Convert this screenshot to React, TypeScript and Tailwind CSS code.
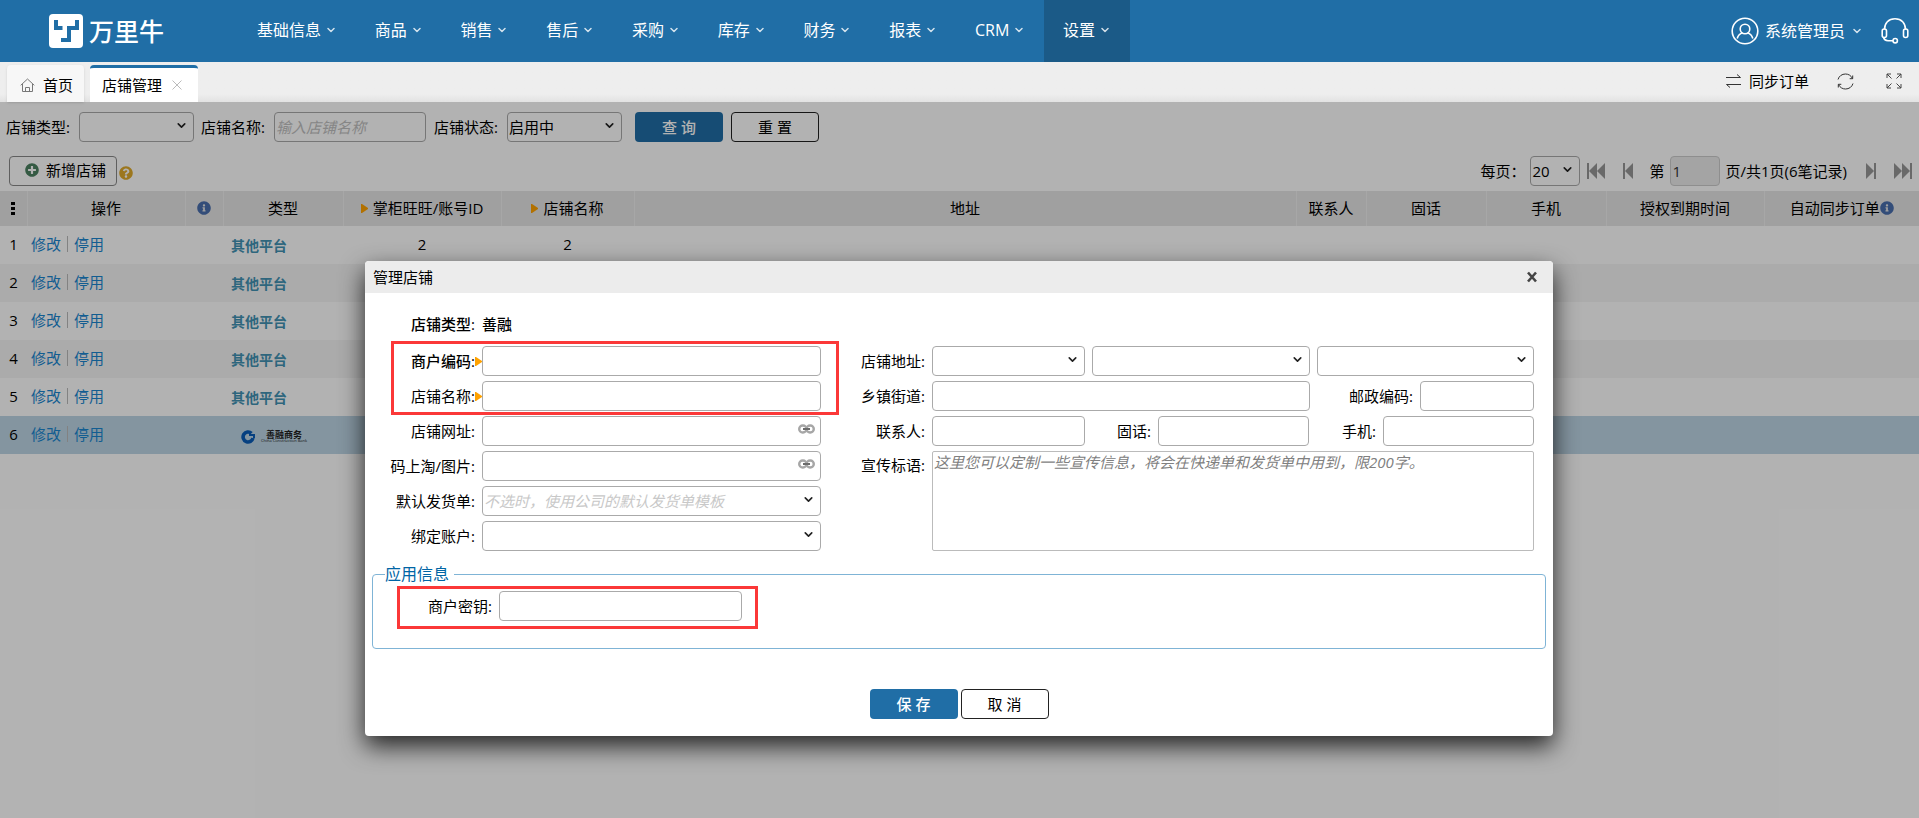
import React from "react"
import { ChevronDown } from "lucide-react"
import { FaInfoCircle, FaPlusCircle, FaQuestionCircle } from "react-icons/fa"
import clsx from "clsx"

const NAV_ITEMS = ["基础信息", "商品", "销售", "售后", "采购", "库存", "财务", "报表", "CRM", "设置"]

type Shop = { id: number; type: "other" | "ccb"; account?: string; name?: string }

const SHOPS: Shop[] = [
  { id: 1, type: "other", account: "2", name: "2" },
  { id: 2, type: "other" },
  { id: 3, type: "other" },
  { id: 4, type: "other" },
  { id: 5, type: "other" },
  { id: 6, type: "ccb" },
]

// Icons

const LogoMark: React.FC = () => (
  <svg width="34" height="34" viewBox="0 0 34 34" aria-hidden="true">
    <rect width="34" height="34" rx="4" fill="#fff" />
    <path d="M7 6v8h6.500M28 6v8h-8v12h-8" fill="none" stroke="#206ea6" strokeWidth="4" />
  </svg>
)

const HomeIcon: React.FC = () => (
  <svg width="15" height="15" viewBox="0 0 15 15" fill="none" stroke="#777" aria-hidden="true">
    <path d="M.7 7.3 7.5 1l6.8 6.3M2.5 6v7.5h10V6M5.5 13.5v-4h4v4" />
  </svg>
)

const CloseThinIcon: React.FC = () => (
  <svg width="10" height="10" viewBox="0 0 10 10" stroke="#bbb" aria-hidden="true">
    <path d="M.5.5l9 9M9.500.5l-9 9" />
  </svg>
)

const UserIcon: React.FC = () => (
  <svg width="28" height="28" viewBox="0 0 28 28" fill="none" stroke="#fff" strokeWidth="1.6" aria-hidden="true">
    <circle cx="14" cy="14" r="12.8" />
    <circle cx="14" cy="12" r="4.8" />
    <path d="M6.200 21.500c1-3.300 3-5 5.300-5.700M21.800 21.500c-1-3.300-3-5-5.300-5.700" />
  </svg>
)

const HeadsetIcon: React.FC = () => (
  <svg width="28" height="28" viewBox="0 0 28 28" fill="none" stroke="#fff" strokeWidth="1.6" aria-hidden="true">
    <path d="M3.500 12.500C3.500 6 7.500 1.800 14 1.800s10.500 4.200 10.500 10.700" />
    <rect x="1.200" y="12" width="4.300" height="8.500" rx="2" />
    <rect x="22.500" y="12" width="4.300" height="8.500" rx="2" />
    <path d="M2.500 20c.5 2.500 2 3.700 4.500 3.700h5" />
    <circle cx="14.200" cy="23.700" r="2.200" />
  </svg>
)

const SwapIcon: React.FC = () => (
  <svg width="15" height="14" viewBox="0 0 15 14" fill="none" stroke="#333" aria-hidden="true">
    <path d="M0 3.500h14.500M11 .5l3.500 3M15 10.500H.5M4 13.500l-3.500-3" />
  </svg>
)

const RefreshIcon: React.FC = () => (
  <svg width="17" height="17" viewBox="0 0 17 17" fill="none" stroke="#333" aria-hidden="true">
    <path d="M1 6.500C2 3 5 1 8.500 1c3 0 5.500 1.500 7 4.500M16 10.500C15 14 12 16 8.500 16c-3 0-5.500-1.500-7-4.500M15.700 2.500v3.200h-3M1.300 14.500v-3.200h3" />
  </svg>
)

const ExpandIcon: React.FC = () => (
  <svg width="16" height="16" viewBox="0 0 16 16" fill="none" stroke="#444" aria-hidden="true">
    <path d="M1 5V1h4M1 1l4.500 4.500M11 1h4v4M15 1l-4.500 4.500M1 11v4h4M1 15l4.500-4.500M15 11v4h-4M15 15l-4.500-4.500" />
  </svg>
)

const LinkIcon: React.FC = () => (
  <svg width="17" height="10" viewBox="0 0 17 10" fill="none" aria-hidden="true">
    <rect x="1.200" y="1.500" width="7.300" height="7" rx="3.500" stroke="#a6a6a6" strokeWidth="2.400" />
    <rect x="8.500" y="1.500" width="7.300" height="7" rx="3.500" stroke="#a6a6a6" strokeWidth="2.400" />
    <path d="M5 5h7" stroke="#6b6b6b" strokeWidth="2" />
  </svg>
)

const SkipIcon: React.FC<{ double?: boolean; flip?: boolean }> = ({ double, flip }) => (
  <svg
    width={double ? 18 : 11}
    height="16"
    viewBox={double ? "0 0 18 16" : "0 0 11 16"}
    fill="#979797"
    className={flip ? "rotate-180" : ""}
    aria-hidden="true"
  >
    <path d="M0 0h2v16H0zM10 0v16L2 8z" />
    {double && <path d="M18 0v16l-8-8z" />}
  </svg>
)

const Marker: React.FC = () => (
  <svg width="7" height="9" viewBox="0 0 7 9" fill="#ffa200" className="shrink-0" aria-hidden="true">
    <path d="M0 0h1l6 4v1L1 9H0z" />
  </svg>
)

const CcbLogo: React.FC = () => (
  <span className="flex items-center gap-1.5 pl-[10px] pt-1">
    <svg width="14" height="14" viewBox="0 0 14 14" fill="none" aria-hidden="true">
      <path d="M10.500 3.300A5 5 0 1 0 12 8" stroke="#0a5cb8" strokeWidth="3.600" />
      <path d="M8 5h5v3" stroke="#0a5cb8" strokeWidth="2" />
    </svg>
    <span className="flex flex-col items-center font-bold text-[#222]">
      <span className="text-[9px] leading-[8px]">善融商务</span>
      <span className="text-[4px] leading-[4px] font-normal">China Construction Bank</span>
    </span>
  </span>
)

// Form controls

const box = "h-[30px] rounded border border-[#aaa] bg-white px-px text-[15px] outline-none"

type SelectProps = { id?: string; label?: string; value?: string; className?: string; hint?: boolean }

const Select: React.FC<SelectProps> = ({ id, label, value = "", className, hint }) => (
  <span className={clsx("relative inline-flex", className)}>
    <select
      id={id}
      aria-label={label}
      className={clsx(box, "w-full appearance-none", hint && "italic text-[#c8c8c8]")}
    >
      <option>{value}</option>
    </select>
    <ChevronDown size={13} strokeWidth={3} className="pointer-events-none absolute right-1.5 top-[7px] text-[#222]" />
  </span>
)

const Label: React.FC<{ htmlFor?: string; className?: string; children: React.ReactNode }> = ({
  htmlFor,
  className,
  children,
}) => (
  <label htmlFor={htmlFor} className={clsx("shrink-0 whitespace-nowrap pr-[7px] text-right", className)}>
    {children}
  </label>
)

type RowProps = { id: string; label: string; bold?: boolean; required?: boolean; children: React.ReactNode }

const LeftRow: React.FC<RowProps> = ({ id, label, bold, required, children }) => (
  <div className="flex h-[30px] items-center">
    <label
      htmlFor={id}
      className={clsx(
        "flex w-[117px] shrink-0 items-center justify-end whitespace-nowrap",
        bold && "font-medium",
        !required && "pr-[7px]",
      )}
    >
      {label}
      {required && <Marker />}
    </label>
    {children}
  </div>
)

const PrimaryButton: React.FC<{ children: React.ReactNode }> = ({ children }) => (
  <button type="button" className="h-[30px] w-[88px] rounded bg-[#206ea6] font-medium text-white">
    {children}
  </button>
)

const PlainButton: React.FC<{ children: React.ReactNode }> = ({ children }) => (
  <button type="button" className="h-[30px] w-[88px] rounded border border-[#222] bg-white">
    {children}
  </button>
)

// Page sections

const Header: React.FC = () => (
  <header className="flex h-[62px] items-center bg-[#206ea6] pb-px text-base text-white">
    <a href="#" className="flex w-[238px] shrink-0 items-center gap-1.5 pl-[49px]">
      <LogoMark />
      <span className="text-[25px] leading-[34px] font-medium">万里牛</span>
    </a>
    <nav className="-mb-px flex w-[892px] self-stretch">
      {NAV_ITEMS.map((item) => (
        <a
          key={item}
          href="#"
          className={clsx(
            "flex grow items-center justify-center gap-1 whitespace-nowrap pb-[2px]",
            item === "设置" && "bg-[#1b5a87]",
          )}
        >
          {item}
          <ChevronDown size={12} strokeWidth={3} className="opacity-80" />
        </a>
      ))}
    </nav>
    <div className="ml-auto flex items-center pr-[10px]">
      <button type="button" className="flex items-center gap-1.5">
        <UserIcon />
        系统管理员
        <ChevronDown size={12} strokeWidth={3} className="opacity-80" />
      </button>
      <button type="button" aria-label="客服" className="ml-[18px]">
        <HeadsetIcon />
      </button>
    </div>
  </header>
)

const TabBar: React.FC = () => (
  <div className="flex h-10 items-end bg-linear-to-b from-[#eee] from-80% to-[#e2e2e2] pl-[7px]">
    <a href="#" className="flex h-[37px] w-[77px] items-center gap-2 rounded-t bg-[#f7f7f7] pl-[13px] pt-[3px] shadow-sm">
      <HomeIcon />
      首页
    </a>
    <div className="ml-1.5 flex h-[37px] w-[108px] items-center gap-2.5 rounded-t border-t-[3px] border-[#206ea6] bg-white pl-3">
      店铺管理
      <button type="button" aria-label="关闭">
        <CloseThinIcon />
      </button>
    </div>
    <div className="ml-auto flex h-10 items-center pb-[2px] pr-[17px]">
      <button type="button" className="flex items-center gap-2">
        <SwapIcon />
        同步订单
      </button>
      <button type="button" aria-label="刷新" className="ml-7">
        <RefreshIcon />
      </button>
      <button type="button" aria-label="全屏" className="ml-8">
        <ExpandIcon />
      </button>
    </div>
  </div>
)

const Filters: React.FC = () => (
  <form className="flex items-center pl-1.5 pt-2.5">
    <label htmlFor="f-type" className="w-[73px]">店铺类型:</label>
    <Select id="f-type" className="w-[115px]" />
    <label htmlFor="f-name" className="ml-[7px] w-[73px]">店铺名称:</label>
    <input id="f-name" placeholder="输入店铺名称" className={clsx(box, "w-[152px] placeholder:italic placeholder:text-[#c0c0c0]")} />
    <label htmlFor="f-state" className="ml-2 w-[73px]">店铺状态:</label>
    <Select id="f-state" value="启用中" className="mr-[13px] w-[115px]" />
    <span className="flex gap-2">
      <PrimaryButton>查 询</PrimaryButton>
      <PlainButton>重 置</PlainButton>
    </span>
  </form>
)

const Toolbar: React.FC = () => (
  <div className="flex items-center py-[5px] pl-[9px] pr-[7px] pt-3.5">
    <button type="button" className="flex h-[30px] w-[108px] items-center gap-[7px] rounded border border-[#888] pb-[2px] pl-[15px]">
      <FaPlusCircle size={14} className="text-[#4b8161]" />
      新增店铺
    </button>
    <FaQuestionCircle size={14} className="ml-[2px] mt-1 text-[#e0ab2c]" />
    <div className="ml-auto flex items-center">
      <label htmlFor="p-size" className="mr-[5px]">每页：</label>
      <Select id="p-size" value="20" className="mr-[7px] w-[50px]" />
      <button type="button" aria-label="首页"><SkipIcon double /></button>
      <button type="button" aria-label="上一页" className="ml-[18px]"><SkipIcon /></button>
      <label htmlFor="p-no" className="ml-[15px] mr-1.5">第</label>
      <input id="p-no" defaultValue="1" className="h-[30px] w-[50px] rounded border border-[#ccc] bg-[#ebebeb] px-px text-[#333]" />
      <span className="ml-[5px]">页/共1页(6笔记录)</span>
      <button type="button" aria-label="下一页" className="ml-[18px]"><SkipIcon flip /></button>
      <button type="button" aria-label="末页" className="ml-[18px]"><SkipIcon double flip /></button>
    </div>
  </div>
)

const Th: React.FC<{ children: React.ReactNode }> = ({ children }) => (
  <th className="h-[35px] border-r border-[#f0f0f0] pb-px font-normal last:border-r-0">
    <span className="flex items-center justify-center">{children}</span>
  </th>
)

const ShopTable: React.FC = () => (
  <table className="w-full table-fixed">
    <colgroup>
      <col className="w-[27px]" />
      <col className="w-[158px]" />
      <col className="w-[38px]" />
      <col className="w-[120px]" />
      <col className="w-[158px]" />
      <col className="w-[133px]" />
      <col />
      <col className="w-[70px]" />
      <col className="w-[120px]" />
      <col className="w-[120px]" />
      <col className="w-[158px]" />
      <col className="w-[155px]" />
    </colgroup>
    <thead className="bg-[#e5e5e5]">
      <tr>
        <Th>
          <svg width="4" height="13" viewBox="0 0 4 13" aria-hidden="true">
            <path d="M0 0h4v3H0zM0 5h4v3H0zM0 10h4v3H0z" />
          </svg>
        </Th>
        <Th>操作</Th>
        <Th><FaInfoCircle size={14} className="shrink-0 text-[#4a6fae]" /></Th>
        <Th>类型</Th>
        <Th><Marker /><span className="ml-[5px]">掌柜旺旺/账号ID</span></Th>
        <Th><Marker /><span className="ml-[5px]">店铺名称</span></Th>
        <Th>地址</Th>
        <Th>联系人</Th>
        <Th>固话</Th>
        <Th>手机</Th>
        <Th>授权到期时间</Th>
        <Th>自动同步订单<FaInfoCircle size={14} className="shrink-0 text-[#4a6fae]" /></Th>
      </tr>
    </thead>
    <tbody>
      {SHOPS.map((shop) => (
        <tr
          key={shop.id}
          className={clsx("h-[38px] text-center", shop.id === 6 ? "bg-[#bdd6e6]" : "even:bg-[#f5f5f5]")}
        >
          <td className="pb-[2px]">{shop.id}</td>
          <td className="pb-[2px] pl-1 text-left text-[#1a86d0]">
            <span className="flex items-center gap-1.5">
              <a href="#">修改</a>
              <span className="h-4 w-px bg-[#bbb]" />
              <a href="#">停用</a>
            </span>
          </td>
          <td />
          <td className="pl-2 text-left">
            {shop.type === "ccb" ? <CcbLogo /> : <span className="text-sm font-bold text-[#4292b4]">其他平台</span>}
          </td>
          <td className="pb-[2px]">{shop.account}</td>
          <td className="pb-[2px]">{shop.name}</td>
          <td />
          <td />
          <td />
          <td />
          <td />
          <td />
        </tr>
      ))}
    </tbody>
  </table>
)

const ShopDialog: React.FC = () => (
  <section
    role="dialog"
    aria-labelledby="dialog-title"
    className="w-[1188px] max-w-full rounded bg-white shadow-[0_10px_25px_rgba(0,0,0,0.8)]"
  >
    <div className="flex h-8 items-center justify-between rounded-t bg-[#ececec] pl-2 pr-[15px]">
      <h2 id="dialog-title">管理店铺</h2>
      <button type="button" aria-label="关闭">
        <svg width="12" height="12" viewBox="0 0 12 12" stroke="#444" strokeWidth="2.600" aria-hidden="true">
          <path d="M2 1.500l8 9M10 1.500l-8 9" />
        </svg>
      </button>
    </div>

    <form>
      <div className="mt-4 mb-[7px] flex h-[30px] items-center font-medium">
        <span className="w-[117px] pr-[7px] text-right">店铺类型:</span>
        <span>善融</span>
      </div>

      <div className="flex pr-[19px]">
        <div className="flex flex-col gap-[5px]">
          <div className="relative flex flex-col gap-[5px]">
            <LeftRow id="d-code" label="商户编码:" bold required>
              <input id="d-code" className={clsx(box, "w-[339px]")} />
            </LeftRow>
            <LeftRow id="d-name" label="店铺名称:" required>
              <input id="d-name" className={clsx(box, "w-[339px]")} />
            </LeftRow>
            <div className="pointer-events-none absolute -bottom-1 -right-[18px] -top-[5px] left-[26px] border-[3px] border-[#fb3838]" />
          </div>
          <LeftRow id="d-url" label="店铺网址:">
            <span className="relative">
              <input id="d-url" className={clsx(box, "block w-[339px] pr-6")} />
              <span className="absolute right-1.5 top-2"><LinkIcon /></span>
            </span>
          </LeftRow>
          <LeftRow id="d-pic" label="码上淘/图片:">
            <span className="relative">
              <input id="d-pic" className={clsx(box, "block w-[339px] pr-6")} />
              <span className="absolute right-1.5 top-2"><LinkIcon /></span>
            </span>
          </LeftRow>
          <LeftRow id="d-bill" label="默认发货单:">
            <Select id="d-bill" value="不选时，使用公司的默认发货单模板" hint className="w-[339px]" />
          </LeftRow>
          <LeftRow id="d-acct" label="绑定账户:">
            <Select id="d-acct" className="w-[339px]" />
          </LeftRow>
        </div>

        <div className="flex min-w-0 grow flex-col gap-[5px]">
          <div className="flex items-center">
            <Label htmlFor="d-prov" className="w-[111px]">店铺地址:</Label>
            <div className="flex grow gap-[7px]">
              <Select id="d-prov" className="w-[153px]" />
              <Select label="市" className="grow" />
              <Select label="区" className="grow" />
            </div>
          </div>
          <div className="flex items-center">
            <Label htmlFor="d-street" className="w-[111px]">乡镇街道:</Label>
            <input id="d-street" className={clsx(box, "min-w-0 grow")} />
            <Label htmlFor="d-zip" className="w-[110px]">邮政编码:</Label>
            <input id="d-zip" className={clsx(box, "w-[114px]")} />
          </div>
          <div className="flex items-center">
            <Label htmlFor="d-person" className="w-[111px]">联系人:</Label>
            <input id="d-person" className={clsx(box, "w-[153px]")} />
            <Label htmlFor="d-tel" className="w-[73px]">固话:</Label>
            <input id="d-tel" className={clsx(box, "min-w-0 grow")} />
            <Label htmlFor="d-mobile" className="w-[74px]">手机:</Label>
            <input id="d-mobile" className={clsx(box, "w-[151px]")} />
          </div>
          <div className="flex">
            <Label htmlFor="d-slogan" className="w-[111px] pt-1">宣传标语:</Label>
            <textarea
              id="d-slogan"
              placeholder="这里您可以定制一些宣传信息，将会在快递单和发货单中用到，限200字。"
              className="h-[100px] grow resize-none rounded-xs border border-[#bbb] px-px leading-5 outline-none placeholder:italic placeholder:text-[#808080]"
            />
          </div>
        </div>
      </div>

      <fieldset className="mx-[7px] mt-3 rounded border border-[#7fb4d6] pb-[27px] pt-1.5">
        <legend className="ml-3 pr-[5px] text-base leading-[22px] text-[#0065a5]">应用信息</legend>
        <div className="relative flex w-[369px] items-center">
          <Label htmlFor="d-key" className="w-[126px]">商户密钥:</Label>
          <input id="d-key" className={clsx(box, "w-[243px]")} />
          <div className="pointer-events-none absolute -bottom-2 -right-4 -top-[5px] left-6 border-[3px] border-[#fb3838]" />
        </div>
      </fieldset>

      <div className="flex justify-center gap-[3px] pb-[17px] pt-10">
        <PrimaryButton>保 存</PrimaryButton>
        <PlainButton>取 消</PlainButton>
      </div>
    </form>
  </section>
)

const App: React.FC = () => (
  <div className="flex min-h-screen flex-col bg-white font-['Open_Sans','Noto_Sans_CJK_SC',sans-serif] text-[15px] leading-5 text-black">
    <Header />
    <TabBar />
    <main className="relative grow">
      <Filters />
      <Toolbar />
      <ShopTable />
      {/* mask and dialog over the list */}
      <div className="absolute inset-0 flex items-start justify-center overflow-hidden bg-black/30 pr-px pt-[159px]">
        <ShopDialog />
      </div>
    </main>
  </div>
)

export default App
